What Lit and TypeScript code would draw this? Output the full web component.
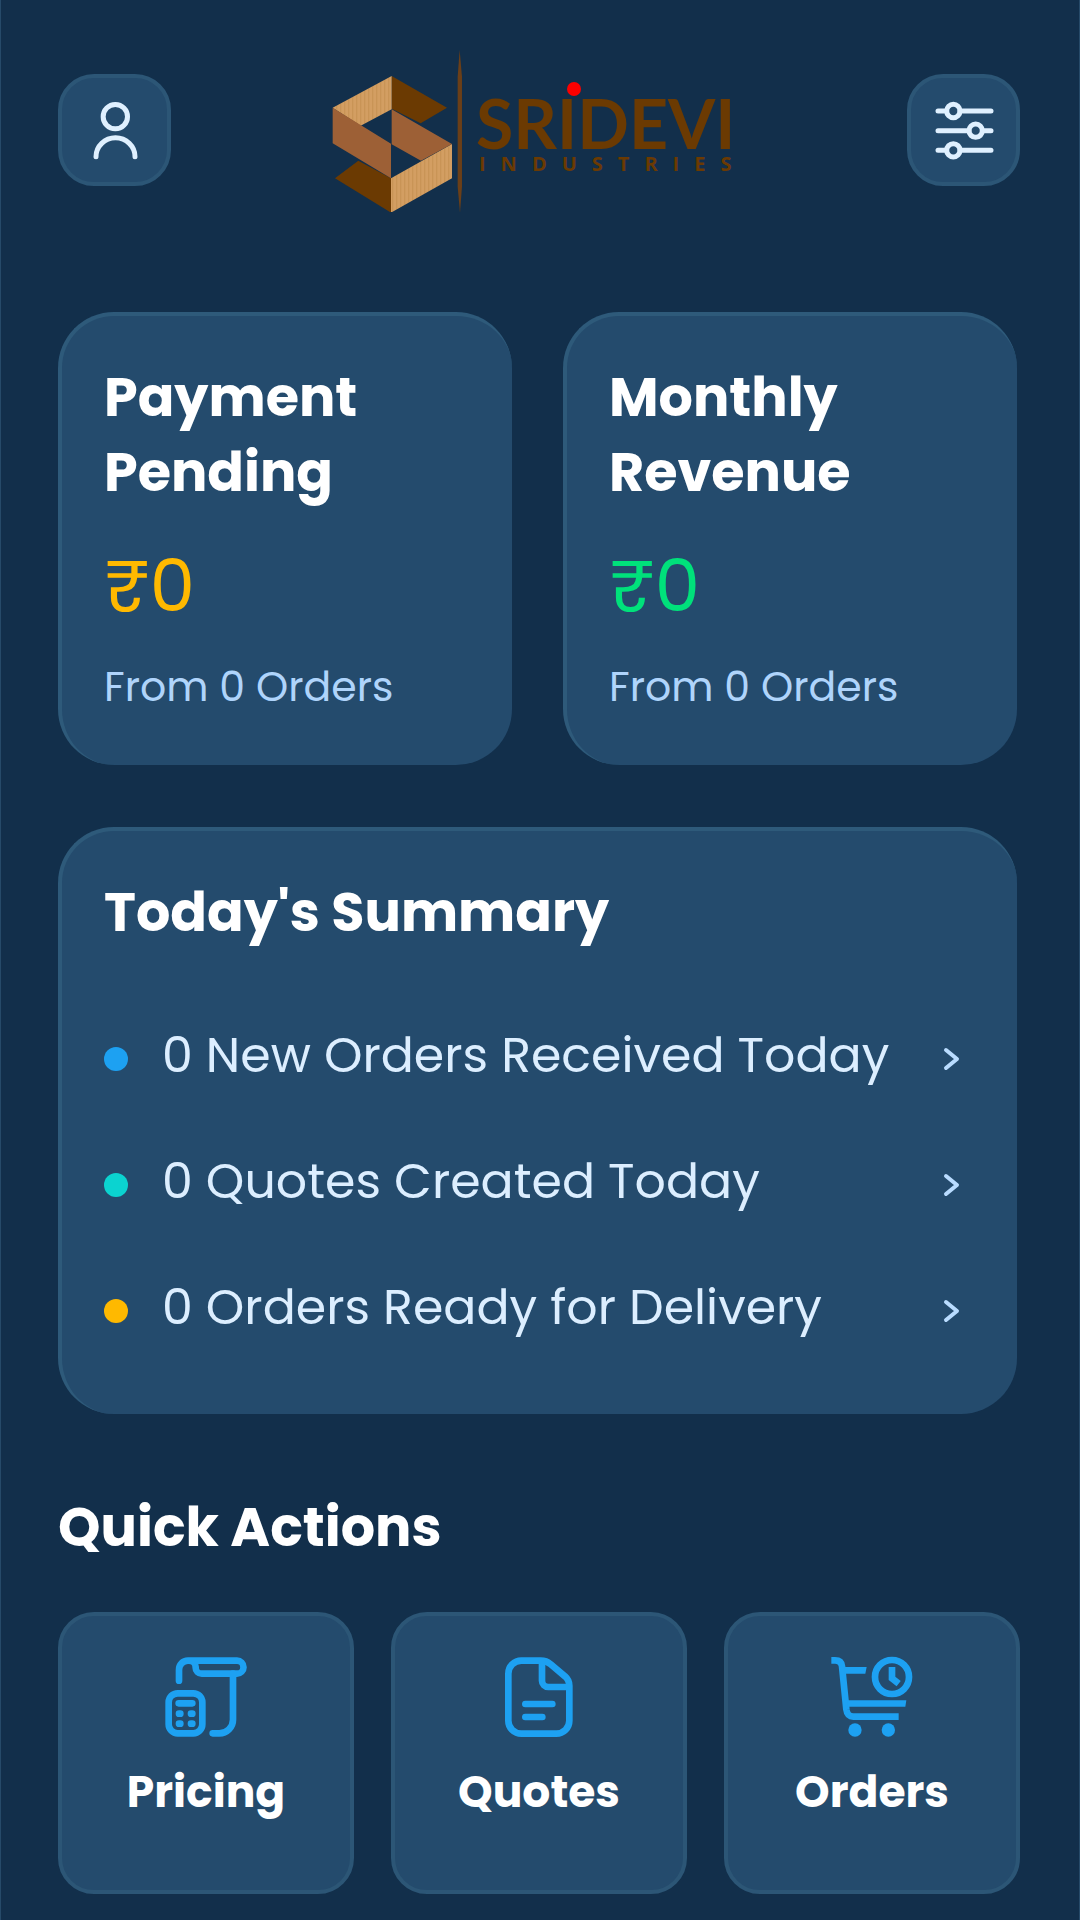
import { LitElement, html, css, svg } from "lit";
import { customElement } from "lit/decorators.js";

const userIcon = svg`<svg class="glyph" viewBox="134 120 180 180" aria-hidden="true">
  <circle cx="225" cy="170" r="36.5" /><path d="M167 290a58 56 0 0 1 117 0" />
</svg>`;

const filterIcon = svg`<svg class="glyph" viewBox="130 120 180 180" aria-hidden="true">
  <path d="M142 153h26M208 153h93M142 212h93M275 212h26M142 271h26M208 271h93" />
  <circle cx="188" cy="153" r="20" /><circle cx="255" cy="212" r="20" /><circle cx="188" cy="271" r="20" />
</svg>`;

const pricingIcon = svg`<svg class="icon" viewBox="374 526 252 252" aria-hidden="true">
  <path d="M419 603V571a27 27 0 0 1 27-28H593a19 19 0 0 1 0 39H487a18 18 0 0 1-18-18V562a20 19 0 0 0-20-19" />
  <path d="M581 582V720a41 41 0 0 1-41 41H520" />
  <rect x="388" y="641" width="101" height="120" rx="27" />
  <path d="M418 671h41M419 702h4M455 702h4M419 732h4M455 732h4" />
</svg>`;

const quotesIcon = svg`<svg class="icon" viewBox="83 165 252 252" aria-hidden="true">
  <path d="M156 182H214c12 0 22 4 30 11L287 229c9 8 13 17 13 28V362a39 39 0 0 1-39 39H156a39 39 0 0 1-39-39V221a39 39 0 0 1 39-39Z" />
  <path d="M218 184V242a19 19 0 0 0 19 19H298M168 312h81M168 351h51" />
</svg>`;

const ordersIcon = svg`<svg class="icon" viewBox="212 166 252 252" aria-hidden="true">
  <path class="butt" d="M216 182H227c13 0 20 6 21 18L261 329c2 15 8 22 21 22H418" />
  <path class="solid" d="M254 202H322L318 222H256ZM265 302H441L438 321H265Z" />
  <circle cx="398" cy="232" r="51" />
  <path class="butt" d="M398 202V236L418 252" />
  <circle class="solid" cx="287" cy="391" r="20" /><circle class="solid" cx="387" cy="391" r="20" />
</svg>`;

const logo = svg`<svg class="logo" viewBox="0 0 430 164" role="img" aria-label="Sridevi Industries">
  <defs>
    <pattern id="grain" width="12" height="12" patternUnits="userSpaceOnUse">
      <rect width="12" height="12" fill="#d39e62" /><rect width="4" height="12" fill="#c99456" />
    </pattern>
  </defs>
  <g transform="translate(-4 -8) scale(0.3333)">
    <path fill="#6b3a02" d="M215 108L381 203L302 250L215 206ZM115 362L213 415V518L45 415Z" />
    <path fill="url(#grain)" d="M38 203L215 108V208L122 257ZM396 312V415L213 518V415Z" />
    <path fill="#9d6036" d="M38 203L213 311V415L38 310ZM215 208L396 312L303 362L215 313Z" />
    <path fill="#6b3f18" d="M419 30L426 110V440L420 518L413 440V110Z" />
  </g>
  <text class="brand" x="152" y="101">SRIDEVI</text>
  <text class="brand-sub" x="155" y="123">INDUSTRIES</text>
  <circle cx="250" cy="41" r="7" fill="#fb0000" />
</svg>`;

const cards = [
  { title: "Payment Pending", value: "₹0", note: "From 0 Orders", tone: "amber" },
  { title: "Monthly Revenue", value: "₹0", note: "From 0 Orders", tone: "green" },
];
const rows = [
  { text: "0 New Orders Received Today", tone: "blue" },
  { text: "0 Quotes Created Today", tone: "teal" },
  { text: "0 Orders Ready for Delivery", tone: "gold" },
];
const actions = [
  { label: "Pricing", icon: pricingIcon },
  { label: "Quotes", icon: quotesIcon },
  { label: "Orders", icon: ordersIcon },
];

@customElement("app-root")
export class AppRoot extends LitElement {
  static styles = css`
    :host { display: block; box-sizing: border-box; min-height: 100vh; background: #122f4b; color: #fff;
      border: solid #264a69; border-width: 0 1px;
      font-family: Poppins, Inter, "Open Sans", sans-serif; }
    * { box-sizing: border-box; }
    h1, h2, p, ul { margin: 0; padding: 0; }
    button { font: inherit; color: inherit; cursor: pointer; }
    .page { padding: 48px 59px 24px 57px; }
    .header { display: flex; justify-content: space-between; align-items: center; }
    .tool { width: 113px; height: 112px; padding: 0; border-radius: 36px; border: 4px solid #2c5676;
      background: #244b6d; display: grid; place-items: center; }
    .glyph { width: 60px; height: 60px; fill: none; stroke: #dff0ff; stroke-width: 15; stroke-linecap: round; }
    .logo { width: 430px; height: 164px; }
    .brand { font: 700 68px Lato, sans-serif; fill: #6b3a02; }
    .brand-sub { font: 700 20px "Open Sans", sans-serif; fill: #6b3a02; letter-spacing: 15px; }
    .stats { display: grid; grid-template-columns: 1fr 1fr; gap: 51px; margin: 100px 3px 0 0; }
    .panel { background: #244b6d; border: solid #2e5a7a; border-width: 4px 0 0 4px; border-radius: 56px; }
    .stat { padding: 44px 42px 48px; }
    .title { font-size: 54px; line-height: 75px; font-weight: 700; }
    .value { font-size: 72px; line-height: 108px; margin-top: 22px; }
    .note { font-size: 41px; line-height: 60px; margin-top: 17px; color: #afd4fb; }
    .amber { color: #ffb900; }
    .green { color: #00e17b; }
    .summary { margin: 62px 3px 0 0; padding: 44px 42px 40px; }
    .list { list-style: none; margin-top: 46px; }
    .row { width: 100%; height: 126px; padding: 0 12px 0 0; border: 0; background: none; text-align: left;
      display: flex; align-items: center; gap: 34px; }
    .row-text { flex: 1; font-size: 49px; line-height: 72px; padding-bottom: 8px; color: #dceeff; }
    .dot { width: 24px; height: 24px; border-radius: 50%; }
    .blue { background: #1da1f2; }
    .teal { background: #0bd3d0; }
    .gold { background: #ffb900; }
    .chevron { width: 24px; height: 24px; fill: none; stroke: #b9dcff; stroke-width: 4; stroke-linecap: round; stroke-linejoin: round; }
    .section { margin-top: 76px; }
    .actions { display: grid; grid-template-columns: repeat(3, 1fr); gap: 37px; margin-top: 47px; }
    .action { height: 282px; padding: 39px 0 0; border: 4px solid #2c5676; border-radius: 36px; background: #244b6d;
      display: flex; flex-direction: column; align-items: center; gap: 22px; }
    .action-label { font-size: 44px; line-height: 62px; font-weight: 700; }
    .icon { width: 84px; height: 84px; fill: none; stroke: #1da1f2; stroke-width: 20; stroke-linecap: round; stroke-linejoin: round; }
    .butt { stroke-linecap: butt; stroke-linejoin: miter; }
    .solid { fill: #1da1f2; stroke: none; }
  `;

  render() {
    return html`<main class="page">
      <header class="header">
        <button class="tool" aria-label="Profile">${userIcon}</button>
        ${logo}
        <button class="tool" aria-label="Filters">${filterIcon}</button>
      </header>
      <section class="stats">
        ${cards.map((c) => html`<article class="panel stat">
          <h2 class="title">${c.title}</h2>
          <p class="value ${c.tone}">${c.value}</p>
          <p class="note">${c.note}</p>
        </article>`)}
      </section>
      <section class="panel summary">
        <h2 class="title">Today's Summary</h2>
        <ul class="list">
          ${rows.map((r) => html`<li><button class="row">
            <span class="dot ${r.tone}"></span>
            <span class="row-text">${r.text}</span>
            <svg class="chevron" viewBox="0 0 24 24" aria-hidden="true"><path d="M7 3L18 12L7 21" /></svg>
          </button></li>`)}
        </ul>
      </section>
      <h2 class="title section">Quick Actions</h2>
      <nav class="actions">
        ${actions.map((a) => html`<button class="action">${a.icon}<span class="action-label">${a.label}</span></button>`)}
      </nav>
    </main>`;
  }
}
